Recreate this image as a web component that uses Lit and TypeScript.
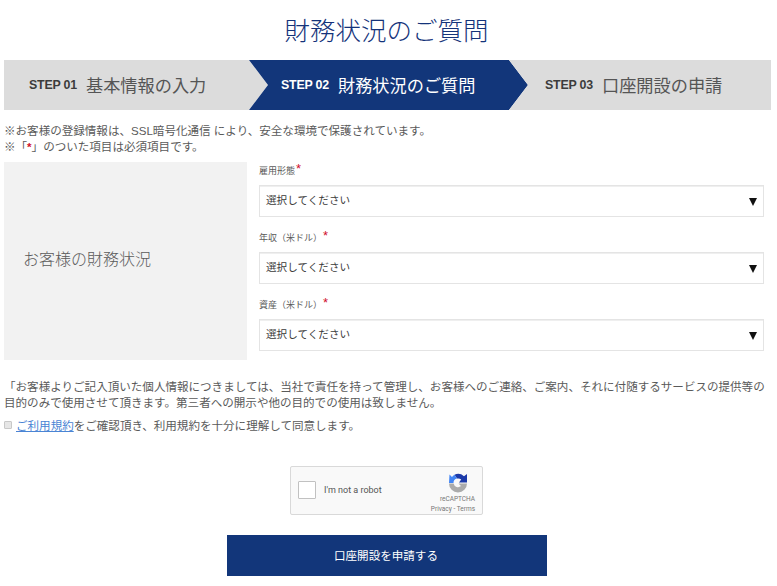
import { LitElement, html, css } from "lit";
import { customElement } from "lit/decorators.js";

@customElement("app-root")
export class AppRoot extends LitElement {
  static styles = css`
    :host {
      display: block;
      width: 777px;
      height: 586px;
      overflow: hidden;
      background: #fff;
      color: #5a5a5a;
      font-family: "Liberation Sans", "Noto Sans CJK JP", sans-serif;
      font-size: 11.55px;
      box-sizing: border-box;
    }
    * { box-sizing: border-box; }
    h1 {
      margin: 0;
      height: 60px;
      padding: 12px 4px 0 0;
      text-align: center;
      font-size: 25.5px;
      line-height: 38px;
      font-weight: 300;
      color: #14337a;
    }
    .steps {
      display: flex;
      margin: 0 6px 0 4px;
      height: 50px;
    }
    .step {
      height: 50px;
      padding-bottom: 1px;
      display: flex;
      align-items: center;
      background: #dcdcdc;
      color: #555;
      font-size: 17.2px;
      font-weight: 400;
      flex: none;
    }
    .step b {
      font-size: 12.4px;
      font-weight: 700;
      margin-right: 9px;
      letter-spacing: -0.2px;
      color: #3c3c3c;
    }
    .s1 {
      width: 264px;
      padding-left: 25px;
      clip-path: polygon(0 0, 245px 0, 264px 50%, 245px 100%, 0 100%);
    }
    .s2 {
      width: 279px;
      margin-left: -19px;
      padding-left: 32px;
      background: #12367a;
      color: #fff;
      clip-path: polygon(0 0, 260px 0, 279px 50%, 260px 100%, 0 100%, 19px 50%);
    }
    .s2 b { color: #fff; }
    .s3 {
      width: 262px;
      margin-left: -19px;
      padding-left: 36px;
      clip-path: polygon(0 0, 100% 0, 100% 100%, 0 100%, 19px 50%);
    }
    .notes {
      margin: 13px 0 0 4px;
      line-height: 16px;
      height: 39px;
    }
    .notes i, .req {
      font-style: normal;
      color: #d0112b;
    }
    .notes i { font-weight: 700; }
    .form {
      display: flex;
      margin: 0 13px 0 4px;
      height: 198px;
    }
    .panel {
      width: 243px;
      flex: none;
      background: #f2f2f2;
      display: flex;
      align-items: center;
      padding: 0 0 6px 19px;
      font-size: 16px;
      font-weight: 300;
    }
    .fields {
      flex: 1;
      margin-left: 12px;
      display: flex;
      flex-direction: column;
    }
    .field { height: 67px; flex: none; }
    label {
      display: flex;
      height: 23px;
      font-size: 9px;
      line-height: 18px;
      white-space: nowrap;
    }
    label .req { font-size: 13px; line-height: 14px; margin-left: 1px; }
    .sel {
      position: relative;
      height: 32px;
      border: 1px solid #e4e4e4;
      box-shadow: inset 0 1px 0 #efefef;
      display: flex;
      align-items: center;
      padding: 0 0 3px 6px;
      font-size: 10.6px;
      color: #3a3a3a;
    }
    .sel::after {
      content: "";
      position: absolute;
      right: 6px;
      top: 12px;
      border-style: solid;
      border-width: 8px 4.5px 0 4.5px;
      border-color: #111 transparent transparent transparent;
    }
    .disclaimer {
      margin: 19px 0 0 4px;
      width: 765px;
      line-height: 16px;
    }
    .agree {
      display: flex;
      align-items: center;
      margin: 6px 0 0 4px;
      height: 16px;
    }
    .box {
      width: 8px;
      height: 8px;
      border: 1px solid #c8c8c8;
      border-radius: 1px;
      background: #e6e6e6;
      margin-right: 4px;
      flex: none;
    }
    a { color: #4a84d4; text-decoration: underline; }
    .captcha {
      width: 193px;
      height: 49px;
      margin: 33px 0 0 290px;
      border: 1px solid #d9d9d9;
      border-radius: 2px;
      background: #f9f9f9;
      display: flex;
      position: relative;
      font-family: Roboto, sans-serif;
    }
    .cb {
      width: 18px;
      height: 18px;
      margin: 14px 0 0 7px;
      border: 1px solid #c1c1c1;
      border-radius: 1px;
      background: #fff;
      flex: none;
    }
    .robot {
      margin: 16px 0 0 8px;
      font-size: 9px;
      line-height: 14px;
      color: #555;
    }
    .brand {
      position: absolute;
      right: 7px;
      top: 6px;
      display: flex;
      flex-direction: column;
      align-items: flex-end;
      font-size: 6.5px;
      line-height: 10px;
      color: #777;
      white-space: nowrap;
    }
    .brand svg { display: block; margin: 0 7px 1px 0; }
    .submit {
      display: flex;
      align-items: center;
      justify-content: center;
      width: 320px;
      height: 41px;
      padding: 0 2px 2px 0;
      margin: 20px 0 0 227px;
      background: #12367a;
      color: #fff;
    }
  `;

  private field(name: string) {
    return html`<div class="field">
      <label>${name}<span class="req">*</span></label>
      <div class="sel">選択してください</div>
    </div>`;
  }

  render() {
    return html`
      <h1>財務状況のご質問</h1>
      <div class="steps">
        <div class="step s1"><b>STEP 01</b>基本情報の入力</div>
        <div class="step s2"><b>STEP 02</b>財務状況のご質問</div>
        <div class="step s3"><b>STEP 03</b>口座開設の申請</div>
      </div>
      <div class="notes">
        ※お客様の登録情報は、SSL暗号化通信 により、安全な環境で保護されています。<br />
        ※「<i>*</i>」のついた項目は必須項目です。
      </div>
      <div class="form">
        <div class="panel">お客様の財務状況</div>
        <div class="fields">
          ${this.field("雇用形態")}
          ${this.field("年収（米ドル）")}
          ${this.field("資産（米ドル）")}
        </div>
      </div>
      <div class="disclaimer">
        「お客様よりご記入頂いた個人情報につきましては、当社で責任を持って管理し、お客様へのご連絡、ご案内、それに付随するサービスの提供等の目的のみで使用させて頂きます。第三者への開示や他の目的での使用は致しません。
      </div>
      <div class="agree">
        <span class="box"></span>
        <span><a href="#">ご利用規約</a>をご確認頂き、利用規約を十分に理解して同意します。</span>
      </div>
      <div class="captcha">
        <div class="cb"></div>
        <div class="robot">I'm not a robot</div>
        <div class="brand">
          <svg width="20" height="20" viewBox="0 0 20 20">
            <path d="M6.5 1.7 A9 9 0 0 1 16 3.2 L19 1 V9.5 H11 L13.2 6.6 A4.5 4.5 0 0 0 9 5.6 Z" fill="#1c3aa9"/>
            <path d="M1.5 1.5 L4 4 A9 9 0 0 1 6.5 1.7 L9 5.6 A4.5 4.5 0 0 0 5.5 10 H1 Z" fill="#4285f4"/>
            <path d="M1 10.5 H5.6 A4.5 4.5 0 0 0 13 13 L10.5 10.5 H19 A9 9 0 0 1 1 10.5 Z" fill="#ababab"/>
          </svg>
          <div>reCAPTCHA</div>
          <div>Privacy - Terms</div>
        </div>
      </div>
      <div class="submit">口座開設を申請する</div>
    `;
  }
}
